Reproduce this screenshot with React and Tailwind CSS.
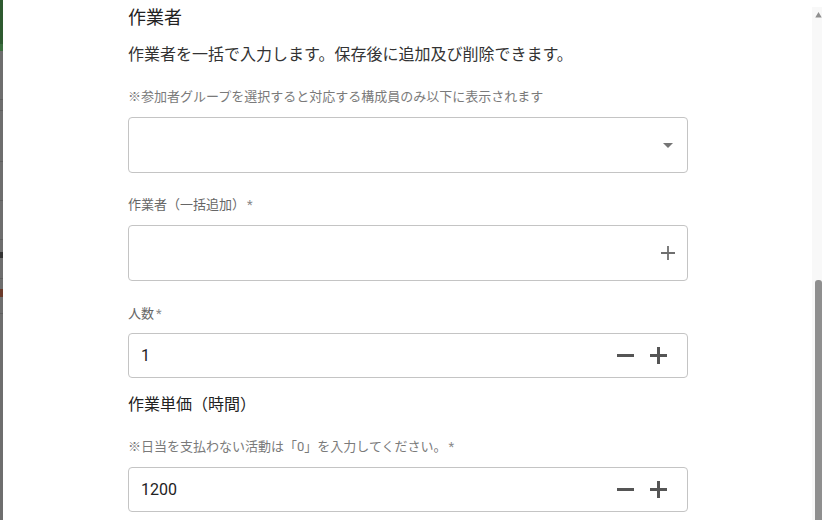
import React from 'react';

const font = "font-['Roboto','Noto_Sans_CJK_JP',sans-serif]";

const Caret = () => (
  <svg width="10" height="5" viewBox="0 0 10 5">
    <path d="M0 0 L10 0 L5 5 Z" fill="#757575" />
  </svg>
);

const ThinPlus = () => (
  <svg width="14" height="14" viewBox="0 0 14 14">
    <path d="M7 0 V14 M0 7 H14" stroke="#6f6f6f" strokeWidth="1.8" />
  </svg>
);

const Minus = () => (
  <svg width="17" height="17" viewBox="0 0 17 17">
    <path d="M0 8.5 H17" stroke="#555" strokeWidth="3" />
  </svg>
);

const Plus = () => (
  <svg width="17" height="17" viewBox="0 0 17 17">
    <path d="M8.5 0 V17 M0 8.5 H17" stroke="#555" strokeWidth="3" />
  </svg>
);

const Req = () => <span className="ml-[2px] text-[#8a8a8a]">*</span>;

const NumberField = ({ value }) => (
  <div className="flex h-[45px] items-center rounded-[4px] border border-[#c4c4c4] pl-[12px] pr-[20px]">
    <span className="flex-1 text-[16px] text-[#222]">{value}</span>
    <div className="flex items-center gap-[16px]">
      <Minus />
      <Plus />
    </div>
  </div>
);

const App = () => {
  return (
    <div className={`flex h-[520px] w-[822px] overflow-hidden bg-white ${font}`}>
      {/* darkened page behind the dialog */}
      <div className="flex w-[3px] flex-col bg-[#6e6e6e]">
        <div className="h-[44px] bg-[#2e5a30]" />
        <div className="h-[7px] bg-[#3b6e3e]" />
        <div className="mt-[48px] h-px bg-[#5f5f5f]" />
        <div className="mt-[10px] h-px bg-[#5f5f5f]" />
        <div className="mt-[50px] h-px bg-[#5f5f5f]" />
        <div className="mt-[38px] h-px bg-[#5f5f5f]" />
        <div className="mt-[38px] h-px bg-[#5f5f5f]" />
        <div className="mt-[12px] h-[6px] bg-[#333]" />
        <div className="mt-[20px] h-px bg-[#5f5f5f]" />
        <div className="mt-[10px] h-[8px] bg-[#6b3b2b]" />
        <div className="mt-[16px] h-px bg-[#5f5f5f]" />
      </div>

      {/* dialog body */}
      <div className="flex-1 pl-[125px]">
        <div className="flex w-[560px] flex-col">
          <h2 className="mt-[6px] text-[18px] leading-[24px] text-[#222]">作業者</h2>
          <p className="mt-[13px] text-[16px] leading-[24px] text-[#333]">
            作業者を一括で入力します。保存後に追加及び削除できます。
          </p>

          <p className="mt-[20px] text-[13px] leading-[20px] text-[#7a7a7a]">
            ※参加者グループを選択すると対応する構成員のみ以下に表示されます
          </p>
          <div className="mt-[10px] flex h-[56px] items-center justify-end rounded-[4px] border border-[#c4c4c4] pr-[14px]">
            <Caret />
          </div>

          <p className="mt-[22px] text-[13px] leading-[20px] text-[#666]">
            作業者（一括追加）<Req />
          </p>
          <div className="mt-[10px] flex h-[56px] items-center justify-end rounded-[4px] border border-[#c4c4c4] pr-[12px]">
            <ThinPlus />
          </div>

          <p className="mt-[23px] text-[13px] leading-[20px] text-[#666]">
            人数<Req />
          </p>
          <div className="mt-[9px]">
            <NumberField value="1" />
          </div>

          <h3 className="mt-[15px] text-[16px] leading-[24px] text-[#222]">作業単価（時間）</h3>
          <p className="mt-[20px] text-[13px] leading-[20px] text-[#7a7a7a]">
            ※日当を支払わない活動は「0」を入力してください。<Req />
          </p>
          <div className="mt-[10px]">
            <NumberField value="1200" />
          </div>
        </div>
      </div>

      {/* scrollbar */}
      <div className="mt-[7px] flex w-[10px] flex-col items-end bg-[#f8f8f8]">
        <svg width="7" height="6" viewBox="0 0 7 6" className="mt-[5px]">
          <path d="M0 6 L3.5 0 L7 6 Z" fill="#8f8f8f" />
        </svg>
        <div className="mt-[262px] h-[260px] w-[7px] rounded-t-[3px] bg-[#8f8f8f]" />
      </div>
    </div>
  );
};

export default App;
